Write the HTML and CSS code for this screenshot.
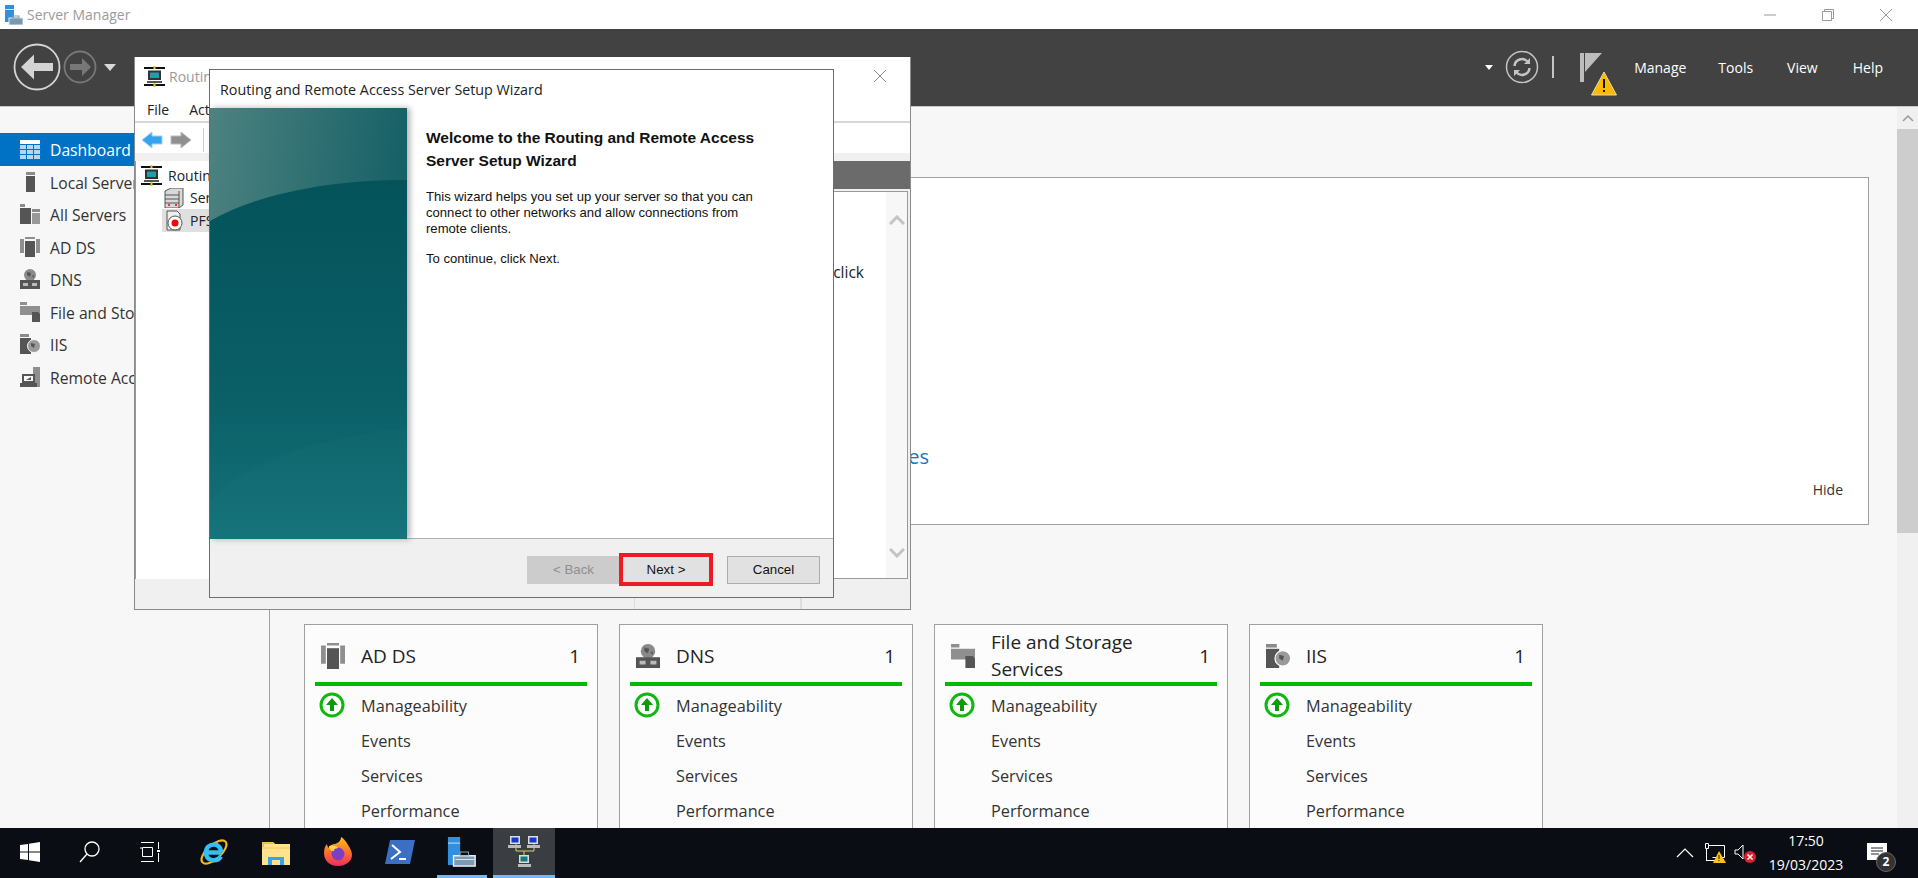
FILE: index.html
```html
<!DOCTYPE html>
<html lang="en">

<head>
    <meta charset="UTF-8">
    <title>Server Manager</title>
    <link rel="stylesheet" href="styles.css">
</head>

<body>
    <div class="app">
        <div class="titlebar">
            <svg class="app-icon" width="20" height="20" viewBox="0 0 20 20">
                <rect x="2" y="0" width="9" height="17" fill="#2f8fe0"/>
                <rect x="2" y="4" width="9" height="1" fill="#cfe6f8"/>
                <rect x="6" y="13" width="14" height="7" fill="#7c98ad" stroke="#dfe9f0"/>
                <rect x="10" y="11" width="6" height="2" fill="none" stroke="#8a9aa6"/>
            </svg>
            <span class="app-title">Server Manager</span>
            <div class="win-controls">
                <svg width="14" height="14" viewBox="0 0 14 14"><path d="M1 7h12" stroke="#999" fill="none"/></svg>
                <svg width="14" height="14" viewBox="0 0 14 14"><path d="M1.500 3.500h9v9h-9zM3.500 3.500v-2h9v9h-2" stroke="#999" fill="none"/></svg>
                <svg width="14" height="14" viewBox="0 0 14 14"><path d="M1 1l12 12M13 1L1 13" stroke="#999" fill="none"/></svg>
            </div>
        </div>

        <div class="topbar">
            <svg class="nav-back" width="48" height="48" viewBox="0 0 48 48">
                <circle cx="24" cy="24" r="22.500" fill="none" stroke="#d4d4d4" stroke-width="1.800"/>
                <path d="M8 24l13-12.500v8.500h19v8H21v8.500z" fill="#d4d4d4"/>
            </svg>
            <svg class="nav-forward" width="34" height="34" viewBox="0 0 34 34">
                <circle cx="17" cy="17" r="15.500" fill="none" stroke="#777" stroke-width="1.800"/>
                <path d="M28 17l-9-9v6H7v6h12v6z" fill="#777"/>
            </svg>
            <span class="caret nav-caret"></span>
            <div class="topbar-right">
                <span class="caret caret-small"></span>
                <svg class="refresh" width="34" height="34" viewBox="0 0 34 34">
                    <circle cx="17" cy="17" r="15.500" fill="none" stroke="#c4c4c4" stroke-width="1.500"/>
                    <path d="M9.500 16a7.500 7.500 0 0 1 13-4.500M24.500 18a7.500 7.500 0 0 1-13 4.500" fill="none" stroke="#c4c4c4" stroke-width="2.500"/>
                    <path d="M25 8v6h-6zM9 26v-6h6z" fill="#c4c4c4"/>
                </svg>
                <span class="top-sep"></span>
                <svg class="flag" width="40" height="46" viewBox="0 0 40 46">
                    <path d="M2 2h4v29H2z" fill="#bdbdbd"/>
                    <path d="M7 2h17L7 21z" fill="#bdbdbd"/>
                    <path d="M26 21l12.500 23h-25z" fill="#ffb900" stroke="#e8d9a8"/>
                    <path d="M25 28h2v9h-2zM25 39h2v2h-2z" fill="#111"/>
                </svg>
                <nav class="top-menu">
                    <span class="menu-manage">Manage</span>
                    <span class="menu-tools">Tools</span>
                    <span class="menu-view">View</span>
                    <span>Help</span>
                </nav>
            </div>
        </div>

        <div class="content">
            <aside class="sidebar">
                <div class="side-item active">
                    <svg width="20" height="19" viewBox="0 0 20 19"><path d="M0 0h20v4H0z" fill="#fff"/><path d="M0 5h6v4H0zM7 5h6v4H7zM14 5h6v4h-6zM0 10h6v4H0zM7 10h6v4H7zM14 10h6v4h-6zM0 15h6v4H0zM7 15h6v4H7zM14 15h6v4h-6z" fill="#b4d6ef"/></svg>
                    <span>Dashboard</span>
                </div>
                <div class="side-item">
                    <svg width="20" height="20" viewBox="0 0 20 20"><path d="M6 0h9v3H6z" fill="#8a8a8a"/><path d="M6 4h9v16H6z" fill="#555"/></svg>
                    <span>Local Server</span>
                </div>
                <div class="side-item">
                    <svg width="20" height="20" viewBox="0 0 20 20"><path d="M0 0h5v3H0zM12 5h8v3h-8z" fill="#8a8a8a"/><path d="M0 4h11v16H0z" fill="#555"/><path d="M12 9h8v11h-8z" fill="#999"/></svg>
                    <span>All Servers</span>
                </div>
                <div class="side-item">
                    <svg width="20" height="20" viewBox="0 0 20 20"><path d="M0 2h4v14H0zM16 2h4v14h-4zM5 0h10v2H5z" fill="#8f8f8f"/><path d="M5 4h10v16H5z" fill="#555"/></svg>
                    <span>AD DS</span>
                </div>
                <div class="side-item">
                    <svg width="20" height="20" viewBox="0 0 20 20"><circle cx="10" cy="6" r="6" fill="#8a8a8a"/><path d="M7 3l4 1-1 4-3-2zM12 7l2-1v3z" fill="#555"/><path d="M0 11h20v9H0z" fill="#555"/><path d="M3 14h5v3H3zM12 14h5v3h-5z" fill="#bbb"/></svg>
                    <span>DNS</span>
                </div>
                <div class="side-item">
                    <svg width="20" height="20" viewBox="0 0 20 20"><path d="M0 0h7v3H0zM0 4h20v13h-7v-4H0z" fill="#8f8f8f" /><path d="M12 10h6l2 2v8h-8z" fill="#555"/></svg>
                    <span>File and Storage Services</span>
                </div>
                <div class="side-item">
                    <svg width="20" height="20" viewBox="0 0 20 20"><path d="M0 0h9v3H0z" fill="#8a8a8a"/><path d="M0 4h11v16H0z" fill="#555"/><circle cx="14" cy="12" r="6.500" fill="#9a9a9a" stroke="#f7f7f7"/><path d="M11 9l4 1-1 4-3-2z" fill="#555"/></svg>
                    <span>IIS</span>
                </div>
                <div class="side-item">
                    <svg width="20" height="20" viewBox="0 0 20 20"><path d="M13 0h7v20h-7z" fill="#8f8f8f"/><path d="M2 7h13v9H2z" fill="#555"/><path d="M4 9h9v5H4z" fill="#f7f7f7"/><path d="M0 16h17v4H0z" fill="#555"/><path d="M6 13l5-3v3z" fill="#555"/></svg>
                    <span>Remote Access</span>
                </div>
            </aside>

            <main class="main">
                <div class="main-inner">
                    <section class="welcome">
                        <a class="cloud-link">Connect this server to cloud services</a>
                        <span class="hide-link">Hide</span>
                    </section>

                    <div class="cards">
                        <section class="card">
                            <header class="card-head">
                                <svg width="24" height="26" viewBox="0 0 20 20" preserveAspectRatio="none"><path d="M0 2h4v14H0zM16 2h4v14h-4zM5 0h10v2H5z" fill="#8f8f8f"/><path d="M5 4h10v16H5z" fill="#555"/></svg>
                                <h2>AD DS</h2>
                                <span class="count">1</span>
                            </header>
                            <div class="card-row"><svg class="ok" width="26" height="26" viewBox="0 0 26 26"><circle cx="13" cy="13" r="11" fill="#fff" stroke="#0fb80f" stroke-width="3"/><path d="M13 6l6 7h-4v6h-4v-6H7z" fill="#0a9a0a"/></svg><span>Manageability</span></div>
                            <div class="card-row"><span>Events</span></div>
                            <div class="card-row"><span>Services</span></div>
                            <div class="card-row"><span>Performance</span></div>
                        </section>

                        <section class="card">
                            <header class="card-head">
                                <svg width="24" height="24" viewBox="0 0 20 20"><circle cx="10" cy="6" r="6" fill="#8a8a8a"/><path d="M7 3l4 1-1 4-3-2zM12 7l2-1v3z" fill="#555"/><path d="M0 11h20v9H0z" fill="#555"/><path d="M3 14h5v3H3zM12 14h5v3h-5z" fill="#bbb"/></svg>
                                <h2>DNS</h2>
                                <span class="count">1</span>
                            </header>
                            <div class="card-row"><svg class="ok" width="26" height="26" viewBox="0 0 26 26"><circle cx="13" cy="13" r="11" fill="#fff" stroke="#0fb80f" stroke-width="3"/><path d="M13 6l6 7h-4v6h-4v-6H7z" fill="#0a9a0a"/></svg><span>Manageability</span></div>
                            <div class="card-row"><span>Events</span></div>
                            <div class="card-row"><span>Services</span></div>
                            <div class="card-row"><span>Performance</span></div>
                        </section>

                        <section class="card">
                            <header class="card-head">
                                <svg width="24" height="24" viewBox="0 0 20 20"><path d="M0 0h7v3H0zM0 4h20v13h-7v-4H0z" fill="#8f8f8f"/><path d="M12 10h6l2 2v8h-8z" fill="#555"/></svg>
                                <h2>File and Storage Services</h2>
                                <span class="count">1</span>
                            </header>
                            <div class="card-row"><svg class="ok" width="26" height="26" viewBox="0 0 26 26"><circle cx="13" cy="13" r="11" fill="#fff" stroke="#0fb80f" stroke-width="3"/><path d="M13 6l6 7h-4v6h-4v-6H7z" fill="#0a9a0a"/></svg><span>Manageability</span></div>
                            <div class="card-row"><span>Events</span></div>
                            <div class="card-row"><span>Services</span></div>
                            <div class="card-row"><span>Performance</span></div>
                        </section>

                        <section class="card">
                            <header class="card-head">
                                <svg width="24" height="24" viewBox="0 0 20 20"><path d="M0 0h9v3H0z" fill="#8a8a8a"/><path d="M0 4h11v16H0z" fill="#555"/><circle cx="14" cy="12" r="6.500" fill="#9a9a9a" stroke="#fff"/><path d="M11 9l4 1-1 4-3-2z" fill="#555"/></svg>
                                <h2>IIS</h2>
                                <span class="count">1</span>
                            </header>
                            <div class="card-row"><svg class="ok" width="26" height="26" viewBox="0 0 26 26"><circle cx="13" cy="13" r="11" fill="#fff" stroke="#0fb80f" stroke-width="3"/><path d="M13 6l6 7h-4v6h-4v-6H7z" fill="#0a9a0a"/></svg><span>Manageability</span></div>
                            <div class="card-row"><span>Events</span></div>
                            <div class="card-row"><span>Services</span></div>
                            <div class="card-row"><span>Performance</span></div>
                        </section>
                    </div>
                </div>
                <div class="scrollbar">
                    <div class="scroll-up"><svg width="12" height="8" viewBox="0 0 12 8"><path d="M1 7l5-5 5 5" fill="none" stroke="#999" stroke-width="1.500"/></svg></div>
                    <div class="scroll-thumb"></div>
                </div>
            </main>
        </div>

        <div class="taskbar">
            <div class="task-btn task-start">
                <svg width="20" height="20" viewBox="0 0 20 20"><path d="M0 3l8-1v7.500H0zM9 1.800L20 0v9.500H9zM0 10.500h8V18l-8-1zM9 10.500h11V20L9 18.200z" fill="#fff"/></svg>
            </div>
            <div class="task-btn task-search">
                <svg width="22" height="24" viewBox="0 0 22 24"><circle cx="13" cy="9" r="7" fill="none" stroke="#fff" stroke-width="1.300"/><path d="M8 14l-7 8" stroke="#fff" stroke-width="1.300"/></svg>
            </div>
            <div class="task-btn task-view">
                <svg width="20" height="20" viewBox="0 0 20 20"><path d="M1 .500h13M1 19.500h13M2.500 5.500h10v9h-10zM1 7v-2M18.500 0v7M18.500 11v9" fill="none" stroke="#fff" stroke-width="1"/><path d="M17 8h3v2h-3z" fill="#fff"/></svg>
            </div>
            <div class="task-btn">
                <svg width="30" height="30" viewBox="0 0 30 30">
                    <ellipse cx="15" cy="15" rx="15.500" ry="7" transform="rotate(-42 15 15)" fill="none" stroke="#f2b71c" stroke-width="2.200"/>
                    <path d="M8 15.500h14.500M22 15.500c0-11-15-10-15 0 0 9 11 10 15 4" fill="none" stroke="#38bdf0" stroke-width="4.500"/>
                </svg>
            </div>
            <div class="task-btn">
                <svg width="28" height="26" viewBox="0 0 28 26">
                    <path d="M0 3h11l2 2h15v21H0z" fill="#ffe28d"/>
                    <path d="M0 3h11l2 2H2v3H0z" fill="#f0c04a"/>
                    <path d="M0 8h28v2H0z" fill="#f7d578"/>
                    <path d="M6 18h16v8h-4v-5h-8v5H6z" fill="#33a5e8"/>
                    <path d="M10 21h8v5h-8z" fill="#ffe28d"/>
                </svg>
            </div>
            <div class="task-btn">
                <svg width="28" height="30" viewBox="0 0 28 30">
                    <defs><linearGradient id="ffgrad" x1="0" y1="0" x2="0" y2="1"><stop offset="0" stop-color="#ffc21e"/><stop offset=".5" stop-color="#ff7428"/><stop offset="1" stop-color="#f02a60"/></linearGradient></defs>
                    <path d="M14 29C5 29 0 23 0 16c0-4 1-7 3-9 0 2 1 3 2 4 1-3 3-4 6-4 3-1 6-3 6-7 2 1 5 4 7 8 3 4 4 8 4 10 0 6-6 11-14 11z" fill="url(#ffgrad)"/>
                    <circle cx="14" cy="17" r="6.500" fill="#7c3fc4"/>
                    <path d="M5 9c3 0 7-1 9 2-2 1-4 0-4 3-3 0-5-2-5-5z" fill="#ffd54a"/>
                </svg>
            </div>
            <div class="task-btn">
                <svg width="30" height="24" viewBox="0 0 30 24">
                    <path d="M5 0h25l-5 24H0z" fill="#3a6fc4"/>
                    <path d="M7 5l8 7-9 7" fill="none" stroke="#fff" stroke-width="2"/>
                    <path d="M14 19h7" stroke="#fff" stroke-width="2"/>
                </svg>
            </div>
            <div class="task-btn running task-manager">
                <svg width="30" height="30" viewBox="0 0 30 32">
                    <rect x="0" y="0" width="13" height="30" fill="#2f8fe0"/>
                    <rect x="0" y="6" width="13" height="1" fill="#cfe6f8"/>
                    <rect x="6" y="20" width="23" height="11" fill="#7c9ab0" stroke="#f2f6f8" stroke-width="1.500"/>
                    <rect x="13" y="16" width="9" height="4" fill="none" stroke="#9aa8b2"/>
                    <path d="M8 24h20" stroke="#e0e8ee"/>
                </svg>
            </div>
            <div class="task-btn running current">
                <svg width="32" height="32" viewBox="0 0 32 32">
                    <path d="M8 8v7h18V8M16 15v6" fill="none" stroke="#d8d060" stroke-width="1"/>
                    <rect x="2" y="0" width="10" height="8" fill="#ddd"/><rect x="3.500" y="1.500" width="7" height="5" fill="#1538d0"/><rect x="0" y="9" width="13" height="3" fill="#bbb"/>
                    <rect x="20" y="0" width="10" height="8" fill="#ddd"/><rect x="21.500" y="1.500" width="7" height="5" fill="#1538d0"/><rect x="19" y="9" width="13" height="3" fill="#bbb"/>
                    <rect x="11" y="19" width="10" height="8" fill="#ddd"/><rect x="12.500" y="20.500" width="7" height="5" fill="#127a80"/><rect x="10" y="28" width="13" height="3" fill="#bbb"/>
                </svg>
            </div>
            <div class="tray">
                <svg class="tray-chevron" width="18" height="10" viewBox="0 0 18 10"><path d="M1 9l8-8 8 8" fill="none" stroke="#fff" stroke-width="1.200"/></svg>
                <svg class="tray-net" width="22" height="20" viewBox="0 0 22 20">
                    <path d="M1.500 2.500h18v12h-12M1.500 2.500v15" fill="none" stroke="#fff"/>
                    <path d="M.5 .5h3v5h-3z" fill="#0a0e14" stroke="#fff"/>
                    <path d="M1 17.500h10" stroke="#fff"/>
                    <path d="M14 8l7 12H8z" fill="#ffc20e"/><path d="M13.500 12h1v4h-1zM13.500 17h1v1h-1z" fill="#111"/>
                </svg>
                <div class="tray-vol">
                    <svg width="22" height="20" viewBox="0 0 22 20"><path d="M1 7h3l5-5v14l-5-5H1z" fill="none" stroke="#fff"/></svg>
                    <svg class="mute" width="12" height="12" viewBox="0 0 12 12"><circle cx="6" cy="6" r="6" fill="#d9202f"/><path d="M3.500 3.500l5 5M8.500 3.500l-5 5" stroke="#fff" stroke-width="1.500"/></svg>
                </div>
                <div class="clock">
                    <span>17:50</span>
                    <span>19/03/2023</span>
                </div>
                <div class="notify">
                    <svg width="20" height="17" viewBox="0 0 20 17"><path d="M0 0h20v17H0z" fill="#fff"/><path d="M4 5h12M4 8h12M4 11h8" stroke="#222"/></svg>
                    <span class="notify-badge">2</span>
                </div>
            </div>
        </div>

        <!-- mmc console behind the wizard -->
        <div class="mmc">
            <div class="mmc-title">
                <svg width="21" height="21" viewBox="0 0 21 21">
                    <path d="M0 2h21M0 19h21" stroke="#111" stroke-width="2"/>
                    <path d="M9.500 0h2v3h-2zM9.500 17h2v4h-2z" fill="#d8d020"/>
                    <path d="M4 4.500h13v9.500H4z" fill="#333"/><path d="M6 6.500h9v5.500H6z" fill="#1f9fa8"/>
                    <path d="M3 15h15v2H3z" fill="#555"/>
                </svg>
                <span class="mmc-name">Routin</span>
                <svg class="mmc-close" width="14" height="14" viewBox="0 0 14 14"><path d="M1 1l12 12M13 1L1 13" stroke="#888" fill="none"/></svg>
            </div>
            <div class="mmc-menu"><span>File</span><span>Action</span><span>View</span><span>Help</span></div>
            <div class="mmc-tools">
                <svg width="22" height="18" viewBox="0 0 22 18"><path d="M1 9l10-8v4h10v8H11v4z" fill="#36a3ee" stroke="#9fd2f5"/></svg>
                <svg width="22" height="18" viewBox="0 0 22 18"><path d="M21 9L11 1v4H1v8h10v4z" fill="#8f8f8f" stroke="#bbb"/></svg>
                <span class="mmc-tool-sep"></span>
            </div>
            <div class="mmc-body">
                <div class="tree">
                    <div class="tree-row tree-root">
                        <svg width="21" height="21" viewBox="0 0 21 21"><path d="M0 2h21M0 19h21" stroke="#111" stroke-width="2"/><path d="M9.500 0h2v3h-2zM9.500 17h2v4h-2z" fill="#d8d020"/><path d="M4 4.500h13v9.500H4z" fill="#333"/><path d="M6 6.500h9v5.500H6z" fill="#1f9fa8"/><path d="M3 15h15v2H3z" fill="#555"/></svg>
                        <span>Routing and Remote Access</span>
                    </div>
                    <div class="tree-row tree-child">
                        <svg width="20" height="20" viewBox="0 0 20 20"><path d="M1 3l6-3h12v17l-4 3H1z" fill="#d8d8d8" stroke="#555"/><path d="M1 7h14M1 11h14M1 15h14M15 3v17" stroke="#555" fill="none"/><path d="M4 16h2v2H4zM11 16h2v2h-2z" fill="#e33"/></svg>
                        <span>Server Status</span>
                    </div>
                    <div class="tree-row tree-child tree-selected">
                        <svg width="20" height="21" viewBox="0 0 20 21"><path d="M3 1h10l3 3v16H3z" fill="#eee" stroke="#555"/><circle cx="11" cy="13" r="7" fill="#fff" stroke="#555"/><circle cx="11" cy="13" r="3.500" fill="#f00"/></svg>
                        <span>PFS</span>
                    </div>
                </div>
                <div class="mmc-right">
                    <div class="mmc-band"></div>
                    <div class="mmc-pane">
                        <p>To add a server, on the Action menu, click</p>
                        <div class="pane-scroll">
                            <svg width="16" height="10" viewBox="0 0 16 10"><path d="M1 9l7-7 7 7" fill="none" stroke="#c4c4c4" stroke-width="3"/></svg>
                            <svg width="16" height="10" viewBox="0 0 16 10"><path d="M1 1l7 7 7-7" fill="none" stroke="#c4c4c4" stroke-width="3"/></svg>
                        </div>
                    </div>
                </div>
            </div>
            <div class="mmc-status"><span></span><span></span><span></span></div>
        </div>

        <!-- setup wizard -->
        <div class="wizard">
            <div class="wiz-title">Routing and Remote Access Server Setup Wizard</div>
            <div class="wiz-body">
                <svg class="wiz-art" width="197" height="431" viewBox="0 0 197 431">
                    <defs>
                        <linearGradient id="wizTop" x1="0" y1="0" x2="1" y2=".25"><stop offset="0" stop-color="#4d8280"/><stop offset="1" stop-color="#145f65"/></linearGradient>
                        <linearGradient id="wizBottom" x1="0" y1="0" x2="0" y2="1"><stop offset="0" stop-color="#04535a"/><stop offset=".6" stop-color="#0b5f67"/><stop offset="1" stop-color="#137278"/></linearGradient>
                    </defs>
                    <rect width="197" height="431" fill="url(#wizTop)"/>
                    <path d="M0 113C50 85 120 72 197 72V431H0z" fill="url(#wizBottom)"/>
                    <path d="M0 431V392C40 350 110 330 197 320V431z" fill="#fff" opacity=".015"/>
                </svg>
                <div class="wiz-text">
                    <h1>Welcome to the Routing and Remote Access<br>Server Setup Wizard</h1>
                    <p>This wizard helps you set up your server so that you can<br>connect to other networks and allow connections from<br>remote clients.</p>
                    <p>To continue, click Next.</p>
                </div>
            </div>
            <div class="wiz-foot">
                <button type="button" class="wiz-btn" disabled>&lt; Back</button>
                <button type="button" class="wiz-btn wiz-next">Next &gt;</button>
                <button type="button" class="wiz-btn wiz-cancel">Cancel</button>
            </div>
        </div>
    </div>
</body>

</html>
```

FILE: styles.css
```css
* {
    box-sizing: border-box;
}

html, body {
    margin: 0;
    height: 100%;
    overflow: hidden;
}

body {
    font-family: "Open Sans", "Noto Sans", sans-serif;
    color: #222;
    background: #f7f7f7;
}

.app {
    position: relative;
    width: 1918px;
    height: 878px;
    display: flex;
    flex-direction: column;
    overflow: hidden;
}

/* title bar */
.titlebar {
    height: 29px;
    background: #fff;
    display: flex;
    align-items: center;
    padding-left: 3px;
    flex: none;
}

.app-icon {
    margin-right: 4px;
}

.app-title {
    font-size: 14px;
    color: #9a9a9a;
}

.win-controls {
    margin-left: auto;
    display: flex;
    gap: 44px;
    padding-right: 25px;
}

/* dark bar */
.topbar {
    height: 78px;
    background: #424242;
    border-bottom: 1px solid #c8c8c8;
    display: flex;
    align-items: center;
    padding-left: 13px;
    padding-bottom: 1px;
    flex: none;
}

.nav-forward {
    margin-left: 2px;
}

.caret {
    width: 0;
    height: 0;
    border-left: 6px solid transparent;
    border-right: 6px solid transparent;
    border-top: 7px solid #d8d8d8;
}

.nav-caret {
    margin-left: 7px;
}

.caret-small {
    border-left-width: 4px;
    border-right-width: 4px;
    border-top: 5px solid #fff;
    margin-right: 12px;
}

.topbar-right {
    margin-left: auto;
    display: flex;
    align-items: center;
}

.top-sep {
    width: 2px;
    height: 22px;
    background: #c4c4c4;
    margin: 0 24px 0 13px;
}

.flag {
    margin-top: 14px;
    margin-left: 0;
}

.top-menu {
    display: flex;
    color: #fff;
    font-size: 14px;
    margin-left: 16px;
    padding-right: 35px;
}

.top-menu span {
    display: block;
}

.menu-manage {
    margin-right: 32px;
}

.menu-tools {
    margin-right: 34px;
}

.menu-view {
    margin-right: 35px;
}

/* main area */
.content {
    flex: 1;
    display: flex;
    min-height: 0;
}

.sidebar {
    width: 270px;
    flex: none;
    background: #f7f7f7;
    border-right: 1px solid #a0a0a0;
    padding-top: 26px;
}

.side-item {
    height: 32.500px;
    display: flex;
    align-items: center;
    padding-left: 20px;
    gap: 10px;
    font-size: 15.700px;
    color: #333;
    white-space: nowrap;
}

.side-item span {
    padding-top: 2px;
}

.side-item svg {
    flex: none;
}

.side-item.active {
    background: #0072c6;
    color: #fff;
}

.main {
    flex: 1;
    display: flex;
    min-width: 0;
}

.main-inner {
    flex: 1;
    padding: 70px 0 0 34px;
    min-width: 0;
    overflow: hidden;
}

.welcome {
    height: 348px;
    margin-right: 28px;
    background: #fff;
    border: 1px solid #a0a0a0;
    display: flex;
    align-items: flex-end;
    justify-content: space-between;
    padding: 0 25px 25px 284px;
}

.cloud-link {
    font-size: 20px;
    color: #1a75bb;
    margin-bottom: 29px;
}

.hide-link {
    font-size: 14px;
    color: #333;
}

.cards {
    display: flex;
    gap: 21px;
    margin-top: 99px;
}

.card {
    width: 294px;
    height: 260px;
    flex: none;
    background: #fcfcfc;
    border: 1px solid #a0a0a0;
    padding: 0 10px;
}

.card-head {
    height: 61px;
    border-bottom: 4px solid #00b900;
    display: flex;
    align-items: center;
    padding: 5px 7px 0 6px;
    margin-bottom: 2px;
}

.card-head svg {
    flex: none;
}

.card-head h2 {
    margin: 0 0 0 16px;
    font-size: 19px;
    font-weight: 400;
    line-height: 27px;
    color: #222;
    width: 170px;
}

.count {
    margin-left: auto;
    font-size: 19px;
}

.card-row {
    height: 35px;
    display: flex;
    align-items: center;
    padding-left: 46px;
    font-size: 16.300px;
    color: #333;
    position: relative;
}

.ok {
    position: absolute;
    left: 4px;
    top: 4px;
}

.scrollbar {
    width: 21px;
    flex: none;
    background: #f0f0f0;
    display: flex;
    flex-direction: column;
}

.scroll-up {
    height: 22px;
    display: flex;
    align-items: center;
    justify-content: center;
}

.scroll-thumb {
    height: 404px;
    background: #cdcdcd;
}

/* taskbar */
.taskbar {
    height: 50px;
    background: #0a0e14;
    color: #fff;
    display: flex;
    flex: none;
}

.task-btn {
    width: 62px;
    height: 50px;
    display: flex;
    align-items: center;
    justify-content: center;
    border-bottom: 3px solid transparent;
    flex: none;
}

.task-start,
.task-search {
    width: 60px;
}

.task-view {
    width: 60px;
    margin-right: 3px;
}

.task-btn.running {
    border-bottom-color: #76b9ed;
}

.task-manager {
    width: 50px;
    margin: 0 6px;
}

.task-btn.current {
    background-color: #3a3d42;
}

.tray {
    margin-left: auto;
    display: flex;
    align-items: center;
    padding-right: 31px;
}

.tray-chevron {
    margin-right: 11px;
}

.tray-net {
    margin-right: 7px;
}

.tray-vol {
    position: relative;
    width: 34px;
    height: 20px;
}

.mute {
    position: absolute;
    left: 10px;
    top: 8px;
}

.clock {
    display: flex;
    flex-direction: column;
    align-items: center;
    width: 74px;
    font-size: 14px;
    line-height: 24px;
    white-space: nowrap;
    margin-left: 1px;
    margin-right: 24px;
}

.notify {
    position: relative;
    width: 20px;
    height: 24px;
    margin-bottom: 4px;
    padding-top: 4px;
}

.notify-badge {
    position: absolute;
    left: 9px;
    top: 13px;
    width: 20px;
    height: 20px;
    border-radius: 50%;
    background: #333;
    border: 1px solid #666;
    color: #fff;
    font-size: 12px;
    font-weight: 700;
    line-height: 18px;
    text-align: center;
}

/* mmc console window */
.mmc {
    position: absolute;
    left: 134px;
    top: 57px;
    width: 777px;
    height: 553px;
    background: #fff;
    border: 1px solid #8a8a8a;
    border-top: 0;
    display: flex;
    flex-direction: column;
}

.mmc-title {
    height: 38px;
    display: flex;
    align-items: center;
    padding: 0 0 0 9px;
    gap: 4px;
    font-size: 14px;
    color: #9a9a9a;
    flex: none;
}

.mmc-close {
    margin-left: auto;
    margin-right: 23px;
}

.mmc-menu {
    height: 28px;
    display: flex;
    align-items: center;
    padding: 3px 0 0 12px;
    gap: 20px;
    font-size: 14px;
    color: #222;
    border-bottom: 2px solid #d8d8d8;
    flex: none;
}

.mmc-tools {
    height: 30px;
    display: flex;
    align-items: center;
    padding: 3px 0 0 6px;
    gap: 7px;
    flex: none;
}

.mmc-tool-sep {
    width: 1px;
    height: 24px;
    background: #ccc;
    margin-left: 4px;
}

.mmc-body {
    flex: 1;
    display: flex;
    min-height: 0;
    background: #f0f0f0;
    padding-top: 8px;
}

.tree {
    width: 300px;
    flex: none;
    background: #fff;
    border-left: 1px solid #999;
    padding-top: 3px;
}

.tree-row {
    height: 22.500px;
    display: flex;
    align-items: center;
    gap: 6px;
    font-size: 14px;
    white-space: nowrap;
    color: #222;
}

.tree-root {
    padding-left: 5px;
}

.tree-child {
    margin-left: 26px;
    padding-left: 2px;
}

.tree-selected {
    background: #e0e0e0;
}

.mmc-right {
    flex: 1;
    display: flex;
    flex-direction: column;
    min-width: 0;
}

.mmc-band {
    height: 28px;
    background: #6b6b6b;
    flex: none;
}

.mmc-pane {
    flex: 1;
    margin: 2px 2px 0 0;
    background: #fff;
    border: 1px solid #999;
    display: flex;
    justify-content: flex-end;
    min-height: 0;
}

.mmc-pane p {
    margin: 69px 22px 0 0;
    font-size: 15.500px;
    color: #222;
    white-space: nowrap;
}

.pane-scroll {
    width: 21px;
    flex: none;
    background: #f7f7f7;
    display: flex;
    flex-direction: column;
    justify-content: space-between;
    align-items: center;
    padding: 23px 0 20px;
}

.mmc-status {
    height: 30px;
    display: flex;
    background: #f0f0f0;
    flex: none;
}

.mmc-status span {
    border-right: 1px solid #ddd;
}

.mmc-status span:nth-child(1) {
    width: 500px;
}

.mmc-status span:nth-child(2) {
    width: 166px;
}

/* wizard dialog */
.wizard {
    position: absolute;
    left: 209px;
    top: 69px;
    width: 625px;
    height: 529px;
    background: #f0f0f0;
    border: 1px solid #6e6e6e;
    display: flex;
    flex-direction: column;
    font-family: "Liberation Sans", Arial, sans-serif;
}

.wiz-title {
    height: 38px;
    background: #fff;
    font-family: "Open Sans", sans-serif;
    font-size: 14.300px;
    color: #222;
    display: flex;
    align-items: center;
    padding-left: 10px;
    flex: none;
}

.wiz-body {
    height: 431px;
    display: flex;
    background: #fff;
    border-bottom: 1px solid #b0b0b0;
    flex: none;
}

.wiz-art {
    flex: none;
    display: block;
    box-shadow: 3px 0 6px rgba(0, 0, 0, 0.3);
}

.wiz-text {
    padding: 17.500px 0 0 19px;
    color: #111;
}

.wiz-text h1 {
    margin: 0 0 17.500px;
    font-size: 15.500px;
    line-height: 23px;
    font-weight: 700;
}

.wiz-text p {
    margin: 0 0 14px;
    font-size: 13.100px;
    line-height: 16px;
}

.wiz-foot {
    flex: 1;
    display: flex;
    align-items: center;
    padding-left: 317px;
    padding-top: 3px;
}

.wiz-btn {
    width: 93px;
    height: 28px;
    background: #e1e1e1;
    border: 1px solid #adadad;
    font-family: inherit;
    font-size: 13.300px;
    color: #111;
    padding: 0;
}

.wiz-btn:disabled {
    background: #ccc;
    border-color: #ccc;
    color: #8f8f8f;
}

.wiz-next {
    height: 33px;
    width: 94px;
    border: 4px solid #ed1c24;
    margin-left: -1px;
}

.wiz-cancel {
    margin-left: 14px;
}
```
